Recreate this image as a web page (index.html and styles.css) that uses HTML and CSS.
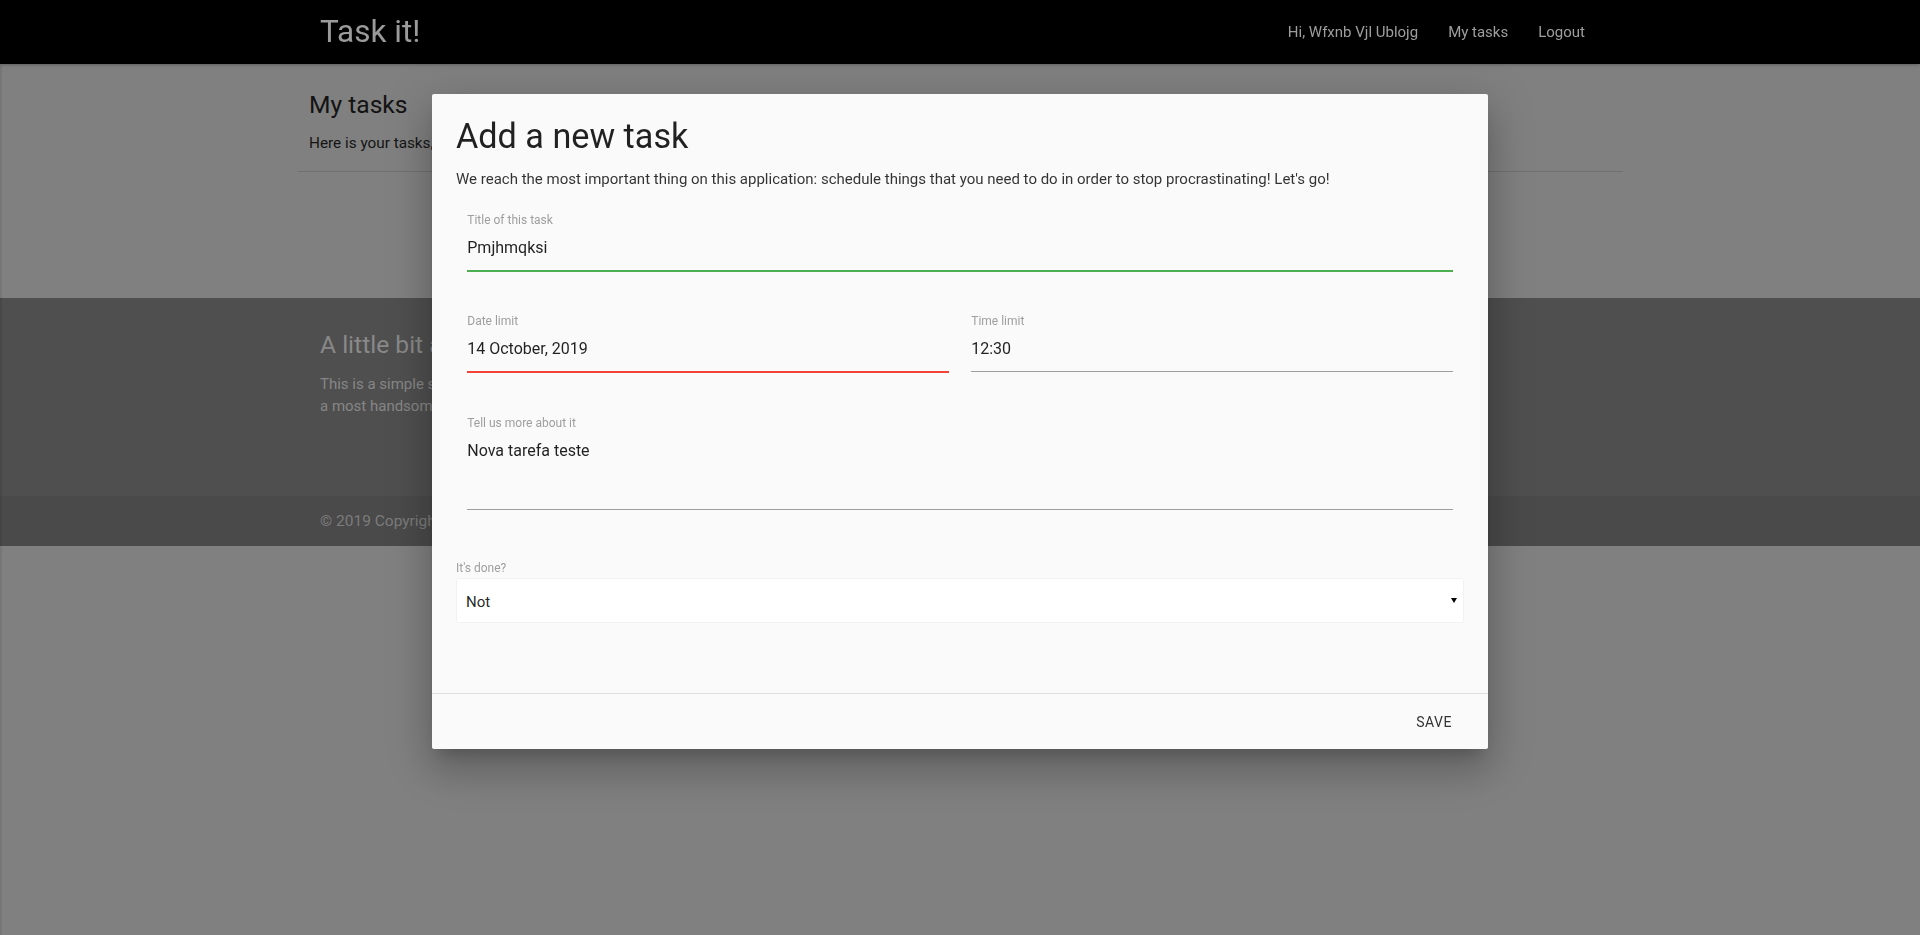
FILE: index.html
```html
<!DOCTYPE html>
<html lang="en">
<head>
<meta charset="utf-8">
<title>Task it! - My tasks</title>
<link rel="stylesheet" href="styles.css">
</head>
<body>
<header class="navbar">
  <div class="nav-wrapper">
    <a class="brand" href="#">Task it!</a>
    <ul class="nav-links">
      <li><a href="#">Hi, Wfxnb Vjl Ublojg</a></li>
      <li><a href="#">My tasks</a></li>
      <li><a href="#">Logout</a></li>
    </ul>
  </div>
</header>

<main class="page">
  <section class="intro">
    <h5 class="intro-title">My tasks</h5>
    <p class="intro-text">Here is your tasks, Wfxnb Vjl Ublojg.</p>
    <div class="divider"></div>
  </section>
</main>

<footer class="page-footer">
  <div class="footer-main">
    <div class="footer-inner">
      <h5 class="footer-title">A little bit about</h5>
      <p class="footer-text">This is a simple site to schedule your tasks, built with<br>a most handsome framework.</p>
    </div>
  </div>
  <div class="footer-copyright">
    <div class="footer-inner">© 2019 Copyright Task it!</div>
  </div>
</footer>

<div class="edge"></div>

<div class="modal" role="dialog" aria-labelledby="modal-title">
  <div class="modal-content">
    <h4 class="modal-title" id="modal-title">Add a new task</h4>
    <p class="modal-lead">We reach the most important thing on this application: schedule things that you need to do in order to stop procrastinating! Let's go!</p>
    <form class="task-form">
      <div class="field">
        <label class="field-label">Title of this task</label>
        <div class="field-value is-valid">Pmjhmqksi</div>
      </div>
      <div class="field-pair">
        <div class="field">
          <label class="field-label">Date limit</label>
          <div class="field-value is-invalid">14 October, 2019</div>
        </div>
        <div class="field">
          <label class="field-label">Time limit</label>
          <div class="field-value">12:30</div>
        </div>
      </div>
      <div class="field field-area">
        <label class="field-label">Tell us more about it</label>
        <div class="field-value textarea">Nova tarefa teste</div>
      </div>
      <div class="select-block">
        <label class="select-label">It's done?</label>
        <div class="select-box">
          <span class="select-text">Not</span>
          <svg class="select-arrow" viewBox="0 0 6 5" aria-hidden="true"><path d="M0 0H6L3 5Z" fill="#000"/></svg>
        </div>
      </div>
    </form>
  </div>
  <div class="modal-footer">
    <a class="btn-flat" href="#">Save</a>
  </div>
</div>
</body>
</html>
```
FILE: styles.css
```css
* {
  box-sizing: border-box;
}

html {
  background: #808080;
}

body {
  margin: 0;
  min-height: 935px;
  font-family: Roboto, "Noto Sans", "Liberation Sans", sans-serif;
  font-size: 15px;
  line-height: 1.5;
  color: rgba(0, 0, 0, 0.87);
  background: #808080;
}

/* ---------- navbar ---------- */
.navbar {
  position: relative;
  z-index: 2;
  height: 64px;
  background: #000;
  box-shadow: 0 2px 2px 0 rgba(0, 0, 0, 0.07), 0 3px 1px -2px rgba(0, 0, 0, 0.06), 0 1px 5px 0 rgba(0, 0, 0, 0.1);
}

.nav-wrapper {
  width: 1280px;
  height: 64px;
  margin: 0 auto;
  display: flex;
  align-items: center;
  justify-content: space-between;
}

.brand {
  font-size: 31.5px;
  line-height: 64px;
  color: #9b9b9b;
  text-decoration: none;
}

.nav-links {
  display: flex;
  margin: 0;
  padding: 0;
  list-style: none;
}

.nav-links a {
  display: block;
  padding: 0 15px;
  font-size: 15px;
  line-height: 64px;
  color: #9e9e9e;
  text-decoration: none;
}

/* ---------- main ---------- */
.page {
  padding: 27px 297px 126px 298px;
}

.intro-title {
  margin: 0 0 0 11px;
  font-size: 24.6px;
  line-height: 27px;
  font-weight: 400;
  color: #131313;
}

.intro-text {
  margin: 13px 0 0 11px;
  font-size: 15.3px;
  line-height: 25px;
  color: #151515;
}

.divider {
  margin-top: 15px;
  height: 1px;
  background: #707070;
}

/* ---------- footer ---------- */
.footer-main {
  height: 198px;
  padding-top: 33px;
  background: #4f4f4f;
}

.footer-inner {
  width: 1280px;
  margin: 0 auto;
}

.footer-title {
  margin: 0;
  font-size: 24.6px;
  line-height: 27px;
  font-weight: 400;
  color: #898989;
}

.footer-text {
  margin: 16px 0 0;
  font-size: 15px;
  line-height: 21.8px;
  color: #868686;
}

.footer-copyright {
  height: 50px;
  line-height: 50px;
  font-size: 15.5px;
  color: #7c7c7c;
  background: #4a4a4a;
}

.edge {
  position: fixed;
  left: 0;
  top: 64px;
  bottom: 0;
  width: 2px;
  background: rgba(0, 0, 0, 0.08);
}

/* ---------- modal ---------- */
.modal {
  position: fixed;
  z-index: 10;
  top: 94px;
  left: 432px;
  width: 1056px;
  height: 655px;
  display: flex;
  flex-direction: column;
  background: #fafafa;
  border-radius: 2px;
  box-shadow: 0 24px 38px 3px rgba(0, 0, 0, 0.14), 0 9px 46px 8px rgba(0, 0, 0, 0.12), 0 11px 15px -7px rgba(0, 0, 0, 0.2);
}

.modal-content {
  flex: 1;
  padding: 24px;
  overflow: hidden;
}

.modal-title {
  margin: 0 0 12px;
  font-size: 34.2px;
  line-height: 37.62px;
  font-weight: 400;
  color: rgba(0, 0, 0, 0.87);
}

.modal-lead {
  margin: 0;
  font-size: 15px;
  line-height: 22.5px;
  color: rgba(0, 0, 0, 0.8);
}

.task-form {
  margin: 0;
  padding: 23px 11.25px 0;
}

.field-label {
  display: block;
  font-size: 12px;
  line-height: 14px;
  color: #9e9e9e;
}

.field-value {
  height: 44px;
  font-size: 16px;
  line-height: 42px;
  color: rgba(0, 0, 0, 0.87);
  border-bottom: 1px solid #9e9e9e;
}

.field-value.is-valid {
  border-bottom-color: #4caf50;
  box-shadow: 0 1px 0 0 #4caf50;
}

.field-value.is-invalid {
  border-bottom-color: #f44336;
  box-shadow: 0 1px 0 0 #f44336;
}

.field-pair {
  display: grid;
  grid-template-columns: 1fr 1fr;
  column-gap: 22.5px;
  margin-top: 43px;
}

.field-area {
  margin-top: 44px;
}

.field-value.textarea {
  height: 80px;
  padding-top: 11px;
  line-height: 19px;
}

.select-block {
  margin: 51px -11.25px 0;
}

.select-label {
  display: block;
  margin-bottom: 3px;
  font-size: 12px;
  line-height: 14px;
  color: #9e9e9e;
}

.select-box {
  position: relative;
  height: 45px;
  padding-left: 9px;
  font-size: 15px;
  line-height: 46px;
  color: rgba(0, 0, 0, 0.87);
  background: #fff;
  border: 1px solid #f2f2f2;
  border-radius: 2px;
}

.select-arrow {
  position: absolute;
  right: 6px;
  top: 19px;
  width: 6px;
  height: 5px;
}

.modal-footer {
  height: 56px;
  display: flex;
  justify-content: flex-end;
  padding: 4px 20px 4px 6px;
  border-top: 1px solid rgba(0, 0, 0, 0.1);
}

.btn-flat {
  height: 36px;
  margin: 6px 0;
  padding: 0 16px;
  font-size: 14px;
  line-height: 36px;
  letter-spacing: 0.5px;
  text-transform: uppercase;
  color: #343434;
  text-decoration: none;
}
```
